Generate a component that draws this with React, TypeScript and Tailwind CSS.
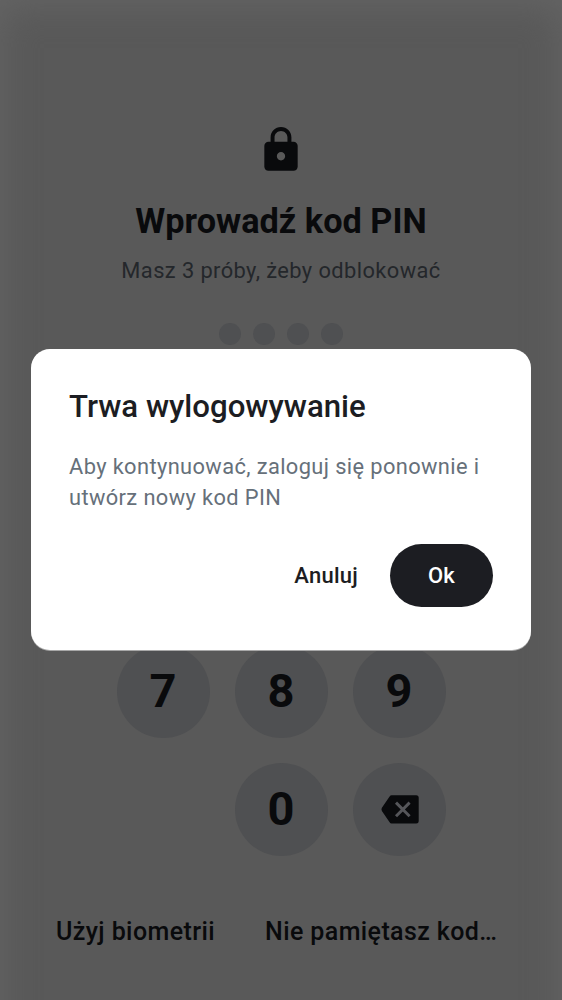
import type { ReactNode } from "react";
import { MdLock } from "react-icons/md";

function Key({ children, label }: { children: ReactNode; label: string }) {
  return (
    <button
      aria-label={label}
      className="flex size-[93px] items-center justify-center rounded-full bg-[#4f5052] pb-[2px] text-[47px] leading-[56px] font-bold"
    >
      {children}
    </button>
  );
}

function Backspace() {
  return (
    <svg width="38" height="29" viewBox="0 0 38 29" className="mt-[2px] ml-[2px] block">
      <path
        d="M10.6 0.3H35.2Q37.7 0.3 37.7 2.8V26.2Q37.7 28.5 35.2 28.5H10.6Q9.4 28.5 8.6 27.3L0.9 16Q0 14.4 0.9 12.8L8.6 1.5Q9.4 0.3 10.6 0.3Z"
        fill="currentColor"
      />
      <path d="M15 7.6L28.6 21.2M28.6 7.6L15 21.2" stroke="#55565a" strokeWidth="2.9" />
    </svg>
  );
}

export default function App() {
  return (
    <div className="relative h-[1000px] w-[562px] overflow-hidden bg-[#595959] font-['Roboto',sans-serif] text-[#090a0c]">
      <div className="absolute inset-x-0 top-0 -bottom-[60px] shadow-[inset_0_4px_36px_#656565]" />
      <main className="relative flex h-full flex-col items-center pt-[125px]">
        <MdLock size={50} />
        <h1 className="mt-[25px] text-[34.3px] leading-[42px] font-bold">Wprowadź kod PIN</h1>
        <p className="mt-[13px] text-[21.85px] leading-[32px] tracking-[0.41px] text-[#24272b]">
          Masz 3 próby, żeby odblokować
        </p>
        <div className="mt-[36px] flex gap-[12.4px]">
          <span className="size-[21.8px] rounded-full bg-[#4f5052]" />
          <span className="size-[21.8px] rounded-full bg-[#4f5052]" />
          <span className="size-[21.8px] rounded-full bg-[#4f5052]" />
          <span className="size-[21.8px] rounded-full bg-[#4f5052]" />
        </div>
        <div className="mt-auto grid grid-cols-3 gap-[25px]">
          <Key label="7">7</Key>
          <Key label="8">8</Key>
          <Key label="9">9</Key>
          <span />
          <Key label="0">0</Key>
          <Key label="Usuń">
            <Backspace />
          </Key>
        </div>
        <div className="mt-[57px] mb-[50px] flex h-[37px] w-full items-center pl-[56px] text-[25px] leading-[37px] font-medium tracking-[0.4px]">
          <button className="w-[209px] text-left">Użyj biometrii</button>
          <button className="whitespace-nowrap">Nie pamiętasz kod…</button>
        </div>
      </main>
      <div
        role="dialog"
        className="absolute top-[349px] left-[31px] flex h-[301px] w-[500px] flex-col rounded-[19px] bg-white px-[38px] pt-[39px] text-[#1c1d22] shadow-[0_1px_0_#a8a8a8]"
      >
        <h2 className="text-[31.2px] leading-[38px] font-medium">Trwa wylogowywanie</h2>
        <p className="mt-[25px] text-[21.85px] leading-[31px] tracking-[0.38px] text-[#66707a]">
          Aby kontynuować, zaloguj się ponownie i<br />
          utwórz nowy kod PIN
        </p>
        <div className="mt-[31px] flex items-center justify-end text-[22px] leading-[31px] font-medium tracking-[0.25px]">
          <button className="mr-[32px]">Anuluj</button>
          <button className="h-[63px] w-[103px] rounded-full bg-[#1c1d22] text-white">Ok</button>
        </div>
      </div>
    </div>
  );
}
